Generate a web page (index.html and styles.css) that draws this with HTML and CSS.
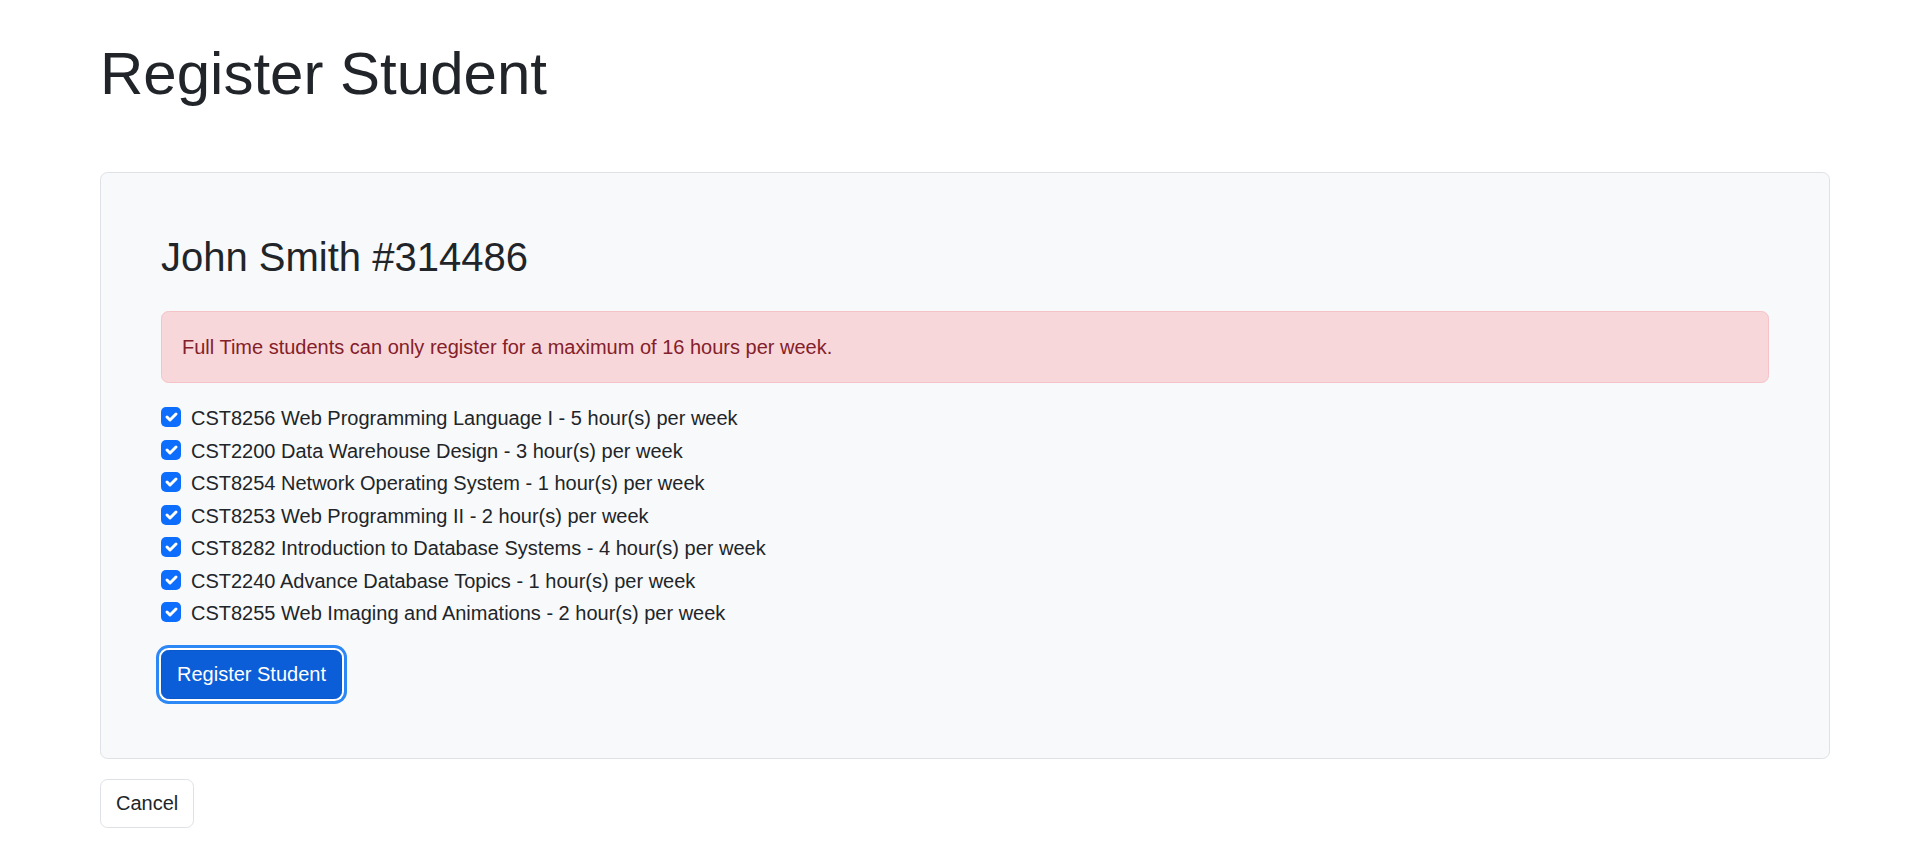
FILE: index.html
```html
<!DOCTYPE html>
<html lang="en">
<head>
<meta charset="utf-8">
<title>Register Student</title>
<link rel="stylesheet" href="styles.css">
</head>
<body>
<main class="page">
  <h1 class="page-title">Register Student</h1>
  <form class="card">
    <h2 class="student-name">John Smith #314486</h2>
    <div class="alert">Full Time students can only register for a maximum of 16 hours per week.</div>
    <div class="course-list">
      <label class="check-row"><span class="check-box"><svg viewBox="0 0 20 20"><path d="m6 10 3 3 6-6"/></svg></span><span>CST8256 Web Programming Language I - 5 hour(s) per week</span></label>
      <label class="check-row"><span class="check-box"><svg viewBox="0 0 20 20"><path d="m6 10 3 3 6-6"/></svg></span><span>CST2200 Data Warehouse Design - 3 hour(s) per week</span></label>
      <label class="check-row"><span class="check-box"><svg viewBox="0 0 20 20"><path d="m6 10 3 3 6-6"/></svg></span><span>CST8254 Network Operating System - 1 hour(s) per week</span></label>
      <label class="check-row"><span class="check-box"><svg viewBox="0 0 20 20"><path d="m6 10 3 3 6-6"/></svg></span><span>CST8253 Web Programming II - 2 hour(s) per week</span></label>
      <label class="check-row"><span class="check-box"><svg viewBox="0 0 20 20"><path d="m6 10 3 3 6-6"/></svg></span><span>CST8282 Introduction to Database Systems - 4 hour(s) per week</span></label>
      <label class="check-row"><span class="check-box"><svg viewBox="0 0 20 20"><path d="m6 10 3 3 6-6"/></svg></span><span>CST2240 Advance Database Topics - 1 hour(s) per week</span></label>
      <label class="check-row"><span class="check-box"><svg viewBox="0 0 20 20"><path d="m6 10 3 3 6-6"/></svg></span><span>CST8255 Web Imaging and Animations - 2 hour(s) per week</span></label>
    </div>
    <div class="actions">
      <button type="button" class="btn btn-primary">Register Student</button>
    </div>
  </form>
  <div class="footer-actions">
    <button type="button" class="btn btn-cancel">Cancel</button>
  </div>
</main>
</body>
</html>
```

FILE: styles.css
```css
* { box-sizing: border-box; }

html, body {
  margin: 0;
  padding: 0;
  background: #ffffff;
}

body {
  font-family: "Liberation Sans", Arial, sans-serif;
  font-size: 20px;
  line-height: 1.5;
  color: #212529;
}

.page {
  width: 1730px;
  margin-left: 100px;
  padding-top: 38px;
}

.page-title {
  margin: 0 0 62px 0;
  font-size: 60px;
  font-weight: 400;
  line-height: 1.2;
  color: #212529;
}

.card {
  display: flex;
  flex-direction: column;
  background: #f8f9fa;
  border: 1.25px solid #dee2e6;
  border-radius: 7.5px;
  padding: 60px 60px 59.5px 60px;
}

.student-name {
  margin: 0 0 30px 0;
  font-size: 40px;
  font-weight: 400;
  line-height: 1.2;
}

.alert {
  background: #f8d7da;
  border: 1.25px solid #f5c2c7;
  border-radius: 7.5px;
  color: #842029;
  padding: 20px 20px;
  margin-bottom: 20px;
}

.course-list {
  display: flex;
  flex-direction: column;
  margin-bottom: 19.5px;
}

.check-row {
  display: flex;
  align-items: flex-start;
  gap: 10px;
  min-height: 30px;
  margin-bottom: 2.5px;
  line-height: 30px;
}

.check-box {
  flex: none;
  width: 20px;
  height: 20px;
  margin-top: 4px;
  border-radius: 5px;
  background: #0d6efd;
  display: flex;
}

.check-box svg {
  width: 20px;
  height: 20px;
  fill: none;
  stroke: #ffffff;
  stroke-width: 3;
  stroke-linecap: round;
  stroke-linejoin: round;
}

.actions {
  display: flex;
}

.btn {
  font-family: "Liberation Sans", Arial, sans-serif;
  font-size: 20px;
  line-height: 30px;
  padding: 8.25px 15px;
  border-radius: 7.5px;
  cursor: pointer;
}

.btn-primary {
  background: #0b5ed7;
  color: #ffffff;
  border: 1.25px solid #0a58ca;
  box-shadow: 0 0 0 2px #ffffff, 0 0 0 5px #2b88f5;
}

.footer-actions {
  display: flex;
  margin-top: 20px;
}

.btn-cancel {
  background: #ffffff;
  color: #212529;
  border: 1.25px solid #dee2e6;
}
```
